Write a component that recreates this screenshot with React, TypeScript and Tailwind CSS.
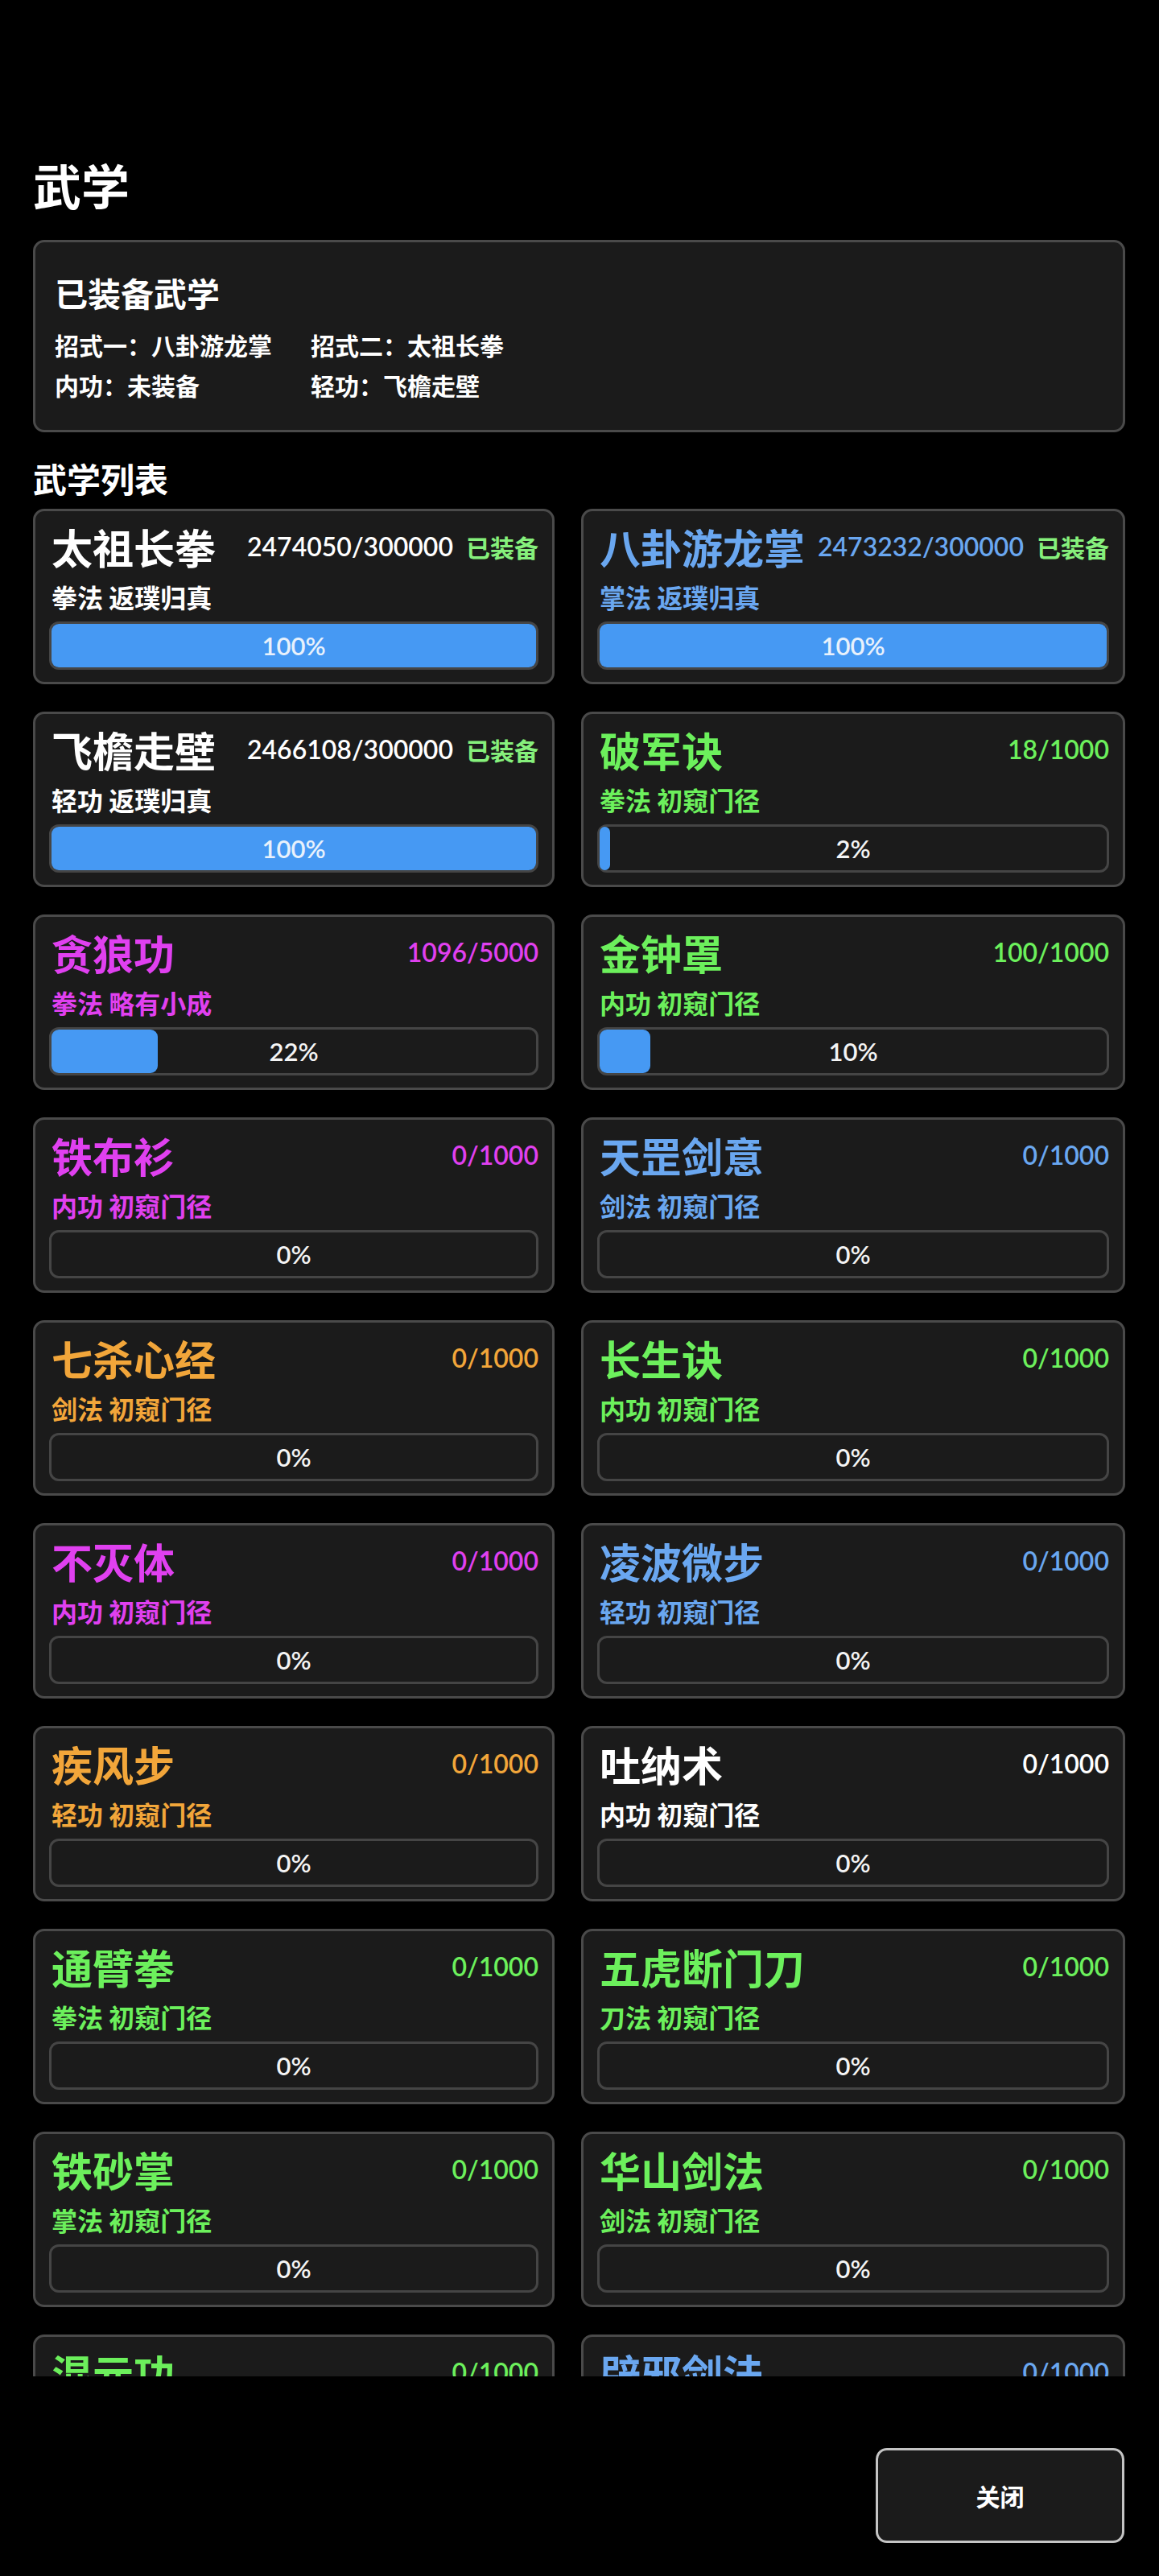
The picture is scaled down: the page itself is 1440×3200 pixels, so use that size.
const CJK = { fontFamily: '"Noto Sans CJK SC", "Noto Sans", sans-serif' };
const NUM = { fontFamily: 'Lato, "Noto Sans CJK SC", sans-serif' };

type Skill = {
  name: string;
  exp: string;
  kind: string;
  level: string;
  pct: number;
  color: string;
  equipped?: boolean;
};

const skills: Skill[] = [
  { name: "太祖长拳", exp: "2474050/300000", kind: "拳法", level: "返璞归真", pct: 100, color: "text-white", equipped: true },
  { name: "八卦游龙掌", exp: "2473232/300000", kind: "掌法", level: "返璞归真", pct: 100, color: "text-[#6aa7f0]", equipped: true },
  { name: "飞檐走壁", exp: "2466108/300000", kind: "轻功", level: "返璞归真", pct: 100, color: "text-white", equipped: true },
  { name: "破军诀", exp: "18/1000", kind: "拳法", level: "初窥门径", pct: 2, color: "text-[#6cf05c]" },
  { name: "贪狼功", exp: "1096/5000", kind: "拳法", level: "略有小成", pct: 22, color: "text-[#e040f0]" },
  { name: "金钟罩", exp: "100/1000", kind: "内功", level: "初窥门径", pct: 10, color: "text-[#6cf05c]" },
  { name: "铁布衫", exp: "0/1000", kind: "内功", level: "初窥门径", pct: 0, color: "text-[#e040f0]" },
  { name: "天罡剑意", exp: "0/1000", kind: "剑法", level: "初窥门径", pct: 0, color: "text-[#6aa7f0]" },
  { name: "七杀心经", exp: "0/1000", kind: "剑法", level: "初窥门径", pct: 0, color: "text-[#f2a63a]" },
  { name: "长生诀", exp: "0/1000", kind: "内功", level: "初窥门径", pct: 0, color: "text-[#6cf05c]" },
  { name: "不灭体", exp: "0/1000", kind: "内功", level: "初窥门径", pct: 0, color: "text-[#e040f0]" },
  { name: "凌波微步", exp: "0/1000", kind: "轻功", level: "初窥门径", pct: 0, color: "text-[#6aa7f0]" },
  { name: "疾风步", exp: "0/1000", kind: "轻功", level: "初窥门径", pct: 0, color: "text-[#f2a63a]" },
  { name: "吐纳术", exp: "0/1000", kind: "内功", level: "初窥门径", pct: 0, color: "text-white" },
  { name: "通臂拳", exp: "0/1000", kind: "拳法", level: "初窥门径", pct: 0, color: "text-[#6cf05c]" },
  { name: "五虎断门刀", exp: "0/1000", kind: "刀法", level: "初窥门径", pct: 0, color: "text-[#6cf05c]" },
  { name: "铁砂掌", exp: "0/1000", kind: "掌法", level: "初窥门径", pct: 0, color: "text-[#6cf05c]" },
  { name: "华山剑法", exp: "0/1000", kind: "剑法", level: "初窥门径", pct: 0, color: "text-[#6cf05c]" },
  { name: "混元功", exp: "0/1000", kind: "内功", level: "初窥门径", pct: 0, color: "text-[#6cf05c]" },
  { name: "辟邪剑法", exp: "0/1000", kind: "剑法", level: "初窥门径", pct: 0, color: "text-[#6aa7f0]" },
];

function ProgressBar({ pct }: { pct: number }) {
  return (
    <div className="relative mt-[11px] h-[60px] rounded-[12px] border-[3px] border-[#454545] bg-[#1b1b1b]">
      {pct > 0 && (
        <div
          className="h-full rounded-[9px] bg-[#4699f3]"
          style={{ width: `${Math.max(pct, 2)}%` }}
        />
      )}
      <div
        className={`absolute inset-0 flex items-center justify-center text-[31px] font-semibold ${
          pct === 100 ? "text-[#e8f1fc]" : "text-[#f4f4f4]"
        }`}
        style={NUM}
      >
        {pct}%
      </div>
    </div>
  );
}

function SkillCard({ s }: { s: Skill }) {
  return (
    <div className="h-[218px] rounded-[14px] border-[3px] border-[#4a4a4a] bg-[#1b1b1b] px-[17px] pt-[16px]">
      <div className={`flex h-[56px] items-center pl-[3px] ${s.color}`}>
        <span className="text-[51px] font-bold leading-[56px] whitespace-nowrap" style={CJK}>
          {s.name}
        </span>
        <span className="ml-auto text-[32px] font-semibold whitespace-nowrap" style={NUM}>
          {s.exp}
        </span>
        {s.equipped && (
          <span className="ml-[16px] text-[30px] font-bold text-[#86f07c] whitespace-nowrap" style={CJK}>
            已装备
          </span>
        )}
      </div>
      <div
        className={`mt-[14px] h-[40px] pl-[3px] text-[32px] font-bold leading-[40px] whitespace-nowrap ${s.color}`}
        style={CJK}
      >
        {s.kind} {s.level}
      </div>
      <ProgressBar pct={s.pct} />
    </div>
  );
}

export default function App() {
  return (
    <div className="h-[3200px] w-[1440px] bg-black text-white" style={CJK}>
      {/* scrolling content, cut off at the bottom like the list view */}
      <div className="h-[2952px] overflow-hidden px-[41px] pt-[199px]">
        <h1 className="h-[60px] text-[60px] font-bold leading-[60px]">武学</h1>

        {/* equipped panel */}
        <div className="mt-[39px] w-[1357px] rounded-[14px] border-[3px] border-[#4a4a4a] bg-[#1b1b1b] pl-[24px] pt-[38px] pb-[31px]">
          <div className="h-[48px] text-[41px] font-bold leading-[48px]">已装备武学</div>
          <div className="mt-[16px] grid grid-cols-[318px_1fr] text-[30px] font-bold leading-[50px]">
            <div>招式一：八卦游龙掌</div>
            <div>招式二：太祖长拳</div>
            <div>内功：未装备</div>
            <div>轻功：飞檐走壁</div>
          </div>
        </div>

        <h2 className="mt-[32px] h-[50px] text-[42px] font-bold leading-[50px]">武学列表</h2>

        <div className="mt-[13px] grid grid-cols-[648px_676px] gap-x-[33px] gap-y-[34px]">
          {skills.map((s) => (
            <SkillCard key={s.name} s={s} />
          ))}
        </div>
      </div>

      {/* footer */}
      <div className="flex justify-end pr-[43px] pt-[89px]">
        <button className="flex h-[118px] w-[309px] items-center justify-center rounded-[14px] border-[3px] border-[#c4c4c4] bg-[#1b1b1b] text-[30px] font-bold text-white">
          关闭
        </button>
      </div>
    </div>
  );
}
